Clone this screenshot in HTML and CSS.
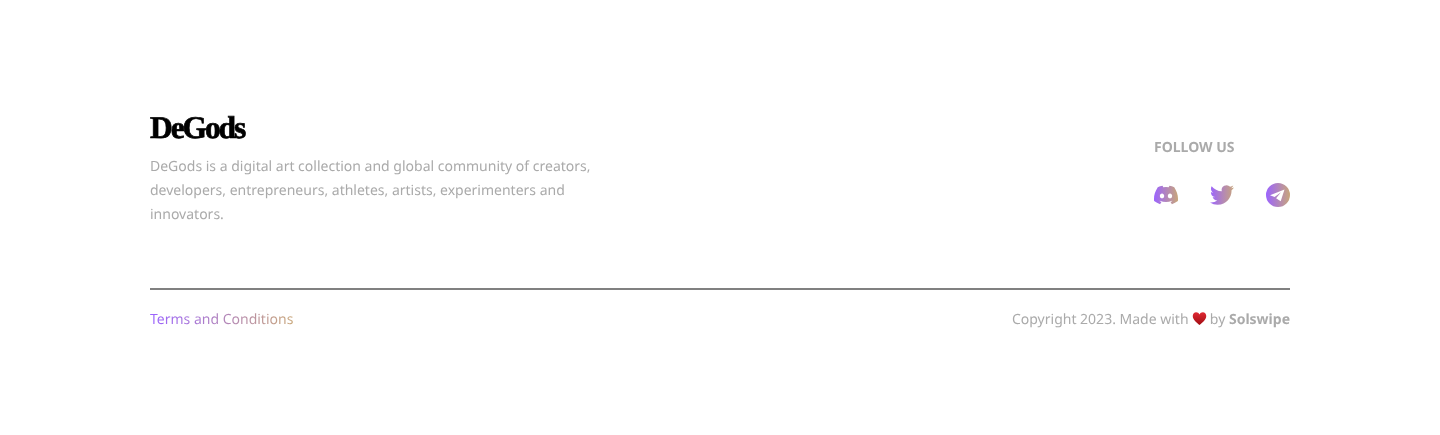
FILE: index.html
```html
<!DOCTYPE html>
<html lang="en">
<head>
    <meta charset="UTF-8">
    <meta name="viewport" content="width=device-width, initial-scale=1.0">
    <title>DeGods</title>
    <link rel="stylesheet" href="styles.css">
</head>
<body>
    <svg class="defs" width="0" height="0" aria-hidden="true">
        <defs>
            <linearGradient id="brand" x1="0" y1="0" x2="1" y2="0">
                <stop offset="0" stop-color="#9b63ff"/>
                <stop offset="1" stop-color="#c8a67a"/>
            </linearGradient>
            <linearGradient id="heart" x1="0" y1="0" x2="0" y2="1">
                <stop offset="0" stop-color="#e02a34"/>
                <stop offset="1" stop-color="#a00c12"/>
            </linearGradient>
        </defs>
    </svg>
    <footer class="footer">
        <div class="top">
            <div class="about">
                <div class="logo">DeGods</div>
                <p class="desc">DeGods is a digital art collection and global community of creators, developers, entrepreneurs, athletes, artists, experimenters and innovators.</p>
            </div>
            <div class="follow">
                <h4>FOLLOW US</h4>
                <div class="icons">
                    <a href="#" aria-label="Discord">
                        <svg width="24" height="24" viewBox="0 0 24 24"><path fill="url(#brand)" d="M20.317 4.37a19.791 19.791 0 0 0-4.885-1.515.074.074 0 0 0-.079.037c-.21.375-.444.864-.608 1.25a18.27 18.27 0 0 0-5.487 0 12.64 12.64 0 0 0-.617-1.25.077.077 0 0 0-.079-.037A19.736 19.736 0 0 0 3.677 4.37a.07.07 0 0 0-.032.027C.533 9.046-.32 13.58.099 18.057a.082.082 0 0 0 .031.057 19.9 19.9 0 0 0 5.993 3.03.078.078 0 0 0 .084-.028 14.09 14.09 0 0 0 1.226-1.994.076.076 0 0 0-.041-.106 13.107 13.107 0 0 1-1.872-.892.077.077 0 0 1-.008-.128 10.2 10.2 0 0 0 .372-.292.074.074 0 0 1 .077-.01c3.928 1.793 8.18 1.793 12.062 0a.074.074 0 0 1 .078.01c.12.098.246.198.373.292a.077.077 0 0 1-.006.127 12.299 12.299 0 0 1-1.873.892.077.077 0 0 0-.041.107c.36.698.772 1.362 1.225 1.993a.076.076 0 0 0 .084.028 19.839 19.839 0 0 0 6.002-3.03.077.077 0 0 0 .032-.054c.5-5.177-.838-9.674-3.549-13.66a.061.061 0 0 0-.031-.03zM8.02 15.33c-1.183 0-2.157-1.085-2.157-2.419 0-1.333.956-2.419 2.157-2.419 1.21 0 2.176 1.096 2.157 2.42 0 1.333-.956 2.418-2.157 2.418zm7.975 0c-1.183 0-2.157-1.085-2.157-2.419 0-1.333.955-2.419 2.157-2.419 1.21 0 2.176 1.096 2.157 2.42 0 1.333-.946 2.418-2.157 2.418z"/></svg>
                    </a>
                    <a href="#" aria-label="Twitter">
                        <svg width="24" height="24" viewBox="0 0 24 24"><path fill="url(#brand)" d="M23.953 4.57a10 10 0 0 1-2.825.775 4.958 4.958 0 0 0 2.163-2.723c-.951.555-2.005.959-3.127 1.184a4.92 4.92 0 0 0-8.384 4.482C7.69 8.095 4.067 6.13 1.64 3.162a4.822 4.822 0 0 0-.666 2.475c0 1.71.87 3.213 2.188 4.096a4.904 4.904 0 0 1-2.228-.616v.06a4.923 4.923 0 0 0 3.946 4.827 4.996 4.996 0 0 1-2.212.085 4.936 4.936 0 0 0 4.604 3.417 9.867 9.867 0 0 1-6.102 2.105c-.39 0-.779-.023-1.17-.067a13.995 13.995 0 0 0 7.557 2.209c9.053 0 13.998-7.496 13.998-13.985 0-.21 0-.42-.015-.63A9.935 9.935 0 0 0 24 4.59z"/></svg>
                    </a>
                    <a href="#" aria-label="Telegram">
                        <svg width="24" height="24" viewBox="0 0 24 24"><path fill="url(#brand)" fill-rule="evenodd" d="M12 0a12 12 0 1 1 0 24 12 12 0 0 1 0-24zM18.500 6.500 4 12.300l4.600 1.800 6.400-4.800-4.900 6 4.600 3z"/></svg>
                    </a>
                </div>
            </div>
        </div>
        <div class="bottom">
            <a class="terms" href="#">Terms and Conditions</a>
            <p class="copy">Copyright 2023. Made with
                <svg class="heart" width="15" height="15" viewBox="0 0 16 16"><path fill="url(#heart)" d="M8 15C5.500 12.500.8 9.300.8 5.200.8 2.900 2.500 1.300 4.400 1.300 6 1.300 7.300 2.200 8 3.700 8.700 2.200 10 1.300 11.600 1.300c1.900 0 3.600 1.600 3.600 3.900C15.200 9.300 10.500 12.500 8 15z"/></svg>
                by <b>Solswipe</b></p>
        </div>
    </footer>
</body>
</html>
```

FILE: styles.css
```css
body {
    margin: 0;
    background-color: #fff;
    font-family: "Noto Sans", sans-serif;
    font-size: 14px;
    color: #aaa;
    text-rendering: geometricPrecision;
}
.defs {
    display: block;
    height: 0;
}
.footer {
    padding: 111px 150px 0;
    will-change: transform;
}
.top {
    display: flex;
    justify-content: space-between;
    align-items: center;
    padding-bottom: 61px;
    border-bottom: 2px solid #808080;
}
.about {
    width: 460px;
}
.logo {
    font-family: "Liberation Serif", serif;
    font-weight: bold;
    font-size: 31.5px;
    line-height: 34px;
    letter-spacing: -2.1px;
    color: #000;
    -webkit-text-stroke: 0.7px #000;
}
.desc {
    margin: 10px 0 0;
    line-height: 24px;
}
.follow {
    width: 136px;
    margin-top: 6px;
}
.follow h4 {
    margin: 0 0 25px;
    font-size: 14px;
    line-height: 21px;
    font-weight: bold;
}
.icons {
    display: flex;
    justify-content: space-between;
}
.icons a {
    display: block;
    height: 24px;
}
.bottom {
    display: flex;
    justify-content: space-between;
    align-items: center;
    padding-top: 20px;
}
.terms {
    background: linear-gradient(90deg, #9b63ff, #c8a67a);
    -webkit-background-clip: text;
    background-clip: text;
    color: transparent;
    text-decoration: none;
    line-height: 19px;
}
.copy {
    margin: 0;
    line-height: 19px;
}
.heart {
    vertical-align: -2px;
    margin-right: -1px;
}
```
